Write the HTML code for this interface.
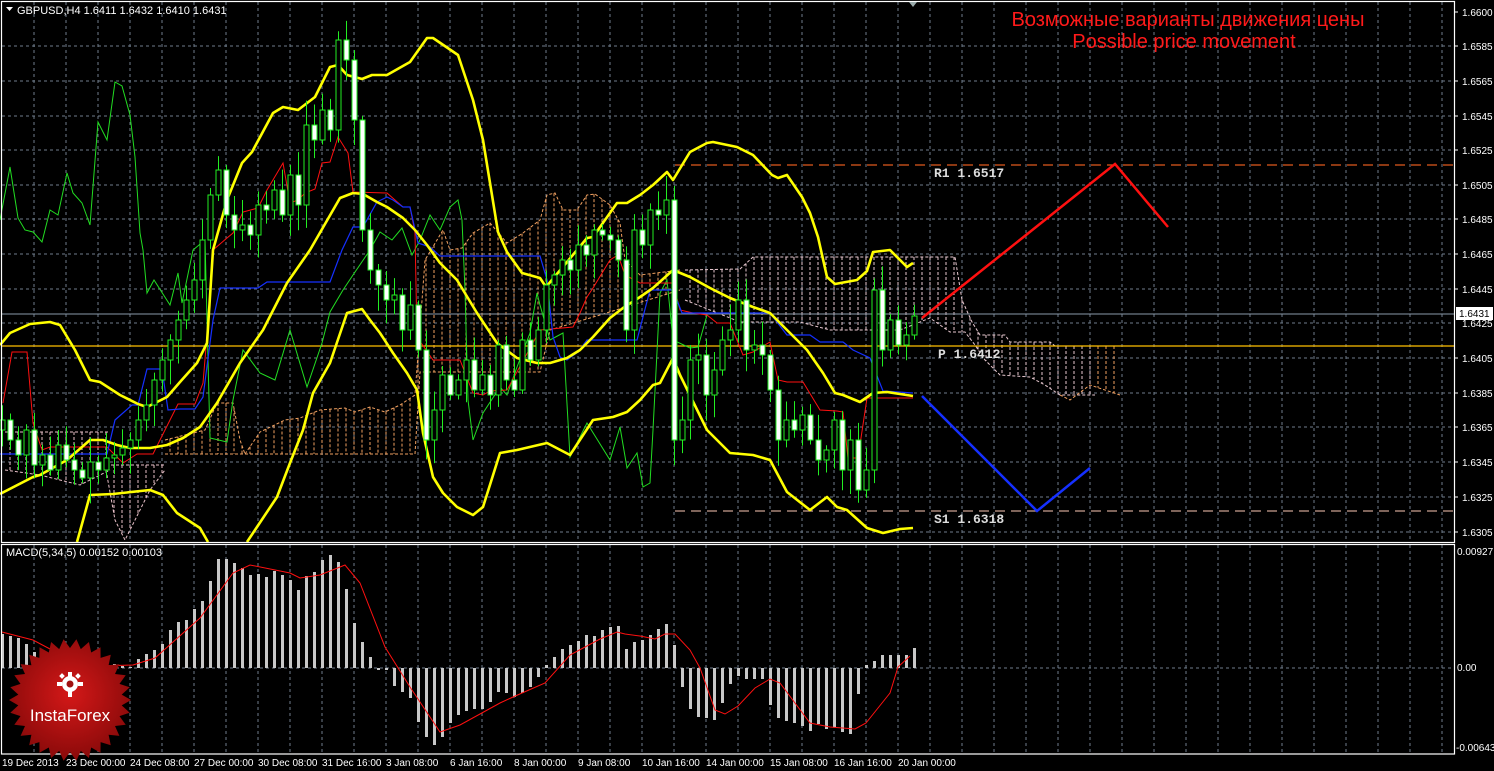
<!DOCTYPE html>
<html><head><meta charset="utf-8">
<style>
html,body{margin:0;padding:0;background:#000;width:1494px;height:771px;overflow:hidden}
svg{display:block}
text{font-family:"Liberation Sans",sans-serif}
text.mono{font-family:"Liberation Mono",monospace}
</style></head><body>
<svg id="s" width="1494" height="771" viewBox="0 0 1494 771" xmlns="http://www.w3.org/2000/svg">
<rect width="1494" height="771" fill="#000"/>
<g id="grid" stroke="#6f7d8c" stroke-width="1" stroke-dasharray="3,3"></g>
<g id="cloud" stroke-width="1" stroke-dasharray="3,2"></g>
<g id="lines" fill="none"></g>
<g id="candles"></g>
<g id="macd"></g>
<g fill="none" stroke="#fff" stroke-width="1.2">
<rect x="1.5" y="1.5" width="1453" height="541"/>
<rect x="1.5" y="544.5" width="1453" height="209.5"/>
</g>
<g id="axis" fill="#fff" font-size="10"></g>
<rect x="1456" y="307" width="37" height="13" fill="#fff"/>
<text x="1459" y="317" font-size="10" fill="#000">1.6431</text>
<path d="M6 7 L13 7 L9.5 11 Z" fill="#fff"/>
<text x="17" y="14" font-size="11" fill="#fff">GBPUSD,H4  1.6411 1.6432 1.6410 1.6431</text>
<path d="M909 2 L917 2 L913 7 Z" fill="#9aa"/>
<text x="1188" y="26" font-size="20" fill="#ff1a1a" text-anchor="middle">Возможные варианты движения цены</text>
<text x="1184" y="48" font-size="20" fill="#ff1a1a" text-anchor="middle">Possible price movement</text>
<g font-size="13" font-weight="bold" fill="#ddd">
<text class="mono" x="934" y="177">R1 1.6517</text>
<text class="mono" x="938" y="358">P 1.6412</text>
<text class="mono" x="934" y="523">S1 1.6318</text>
</g>
<text x="6" y="556" font-size="11" fill="#fff">MACD(5,34,5) 0.00152 0.00103</text>
<text x="1457" y="555" font-size="10" fill="#fff">0.00927</text>
<text x="1457" y="671" font-size="10" fill="#fff">0.00</text>
<text x="1456" y="751" font-size="10" fill="#fff">-0.00643</text>
<g id="time" fill="#fff" font-size="10"></g>
<defs><radialGradient id="rg" cx="50%" cy="45%" r="55%"><stop offset="0" stop-color="#d41818"/><stop offset="1" stop-color="#8a0a0a"/></radialGradient></defs>
<polygon id="star" fill="url(#rg)"/>
<g fill="#fff">
<circle cx="70" cy="684" r="8"/>
<circle cx="70" cy="684" r="3.5" fill="#a01010"/>
<rect x="68" y="672" width="4" height="5"/><rect x="68" y="691" width="4" height="6"/>
<rect x="57" y="682" width="5" height="4"/><rect x="78" y="682" width="5" height="4"/>
<rect x="60" y="674" width="4" height="4" transform="rotate(45 62 676)"/>
<rect x="76" y="674" width="4" height="4" transform="rotate(45 78 676)"/>
</g>
<text x="70" y="721" font-size="17" fill="#fff" text-anchor="middle">InstaForex</text>
</svg>
<script>
(function(){
var NS="http://www.w3.org/2000/svg";
function el(p,t,a){var e=document.createElementNS(NS,t);for(var k in a)e.setAttribute(k,a[k]);p.appendChild(e);return e;}
var g=document.getElementById('grid');
for(var x=34;x<1454;x+=32){el(g,'line',{x1:x,y1:2,x2:x,y2:542});el(g,'line',{x1:x,y1:545,x2:x,y2:753});}
var py=[12,46,81,116,150,185,219,254,289,323,358,393,427,462,497,532];
var pl=["1.6600","1.6585","1.6565","1.6545","1.6525","1.6505","1.6485","1.6465","1.6445","1.6425","1.6405","1.6385","1.6365","1.6345","1.6325","1.6305"];
for(var i=1;i<py.length;i++)el(g,'line',{x1:2,y1:py[i],x2:1454,y2:py[i]});
el(g,'line',{x1:2,y1:668,x2:1454,y2:668});
var ax=document.getElementById('axis');
for(var i=0;i<py.length;i++){if(pl[i]=="1.6425")continue;var t=el(ax,'text',{x:1462,y:py[i]+4});t.textContent=pl[i];el(ax,'line',{x1:1454,y1:py[i],x2:1458,y2:py[i],stroke:'#fff'});}
var t0=el(ax,'text',{x:1462,y:327});t0.textContent="1.6425";
var tl=["19 Dec 2013","23 Dec 00:00","24 Dec 08:00","27 Dec 00:00","30 Dec 08:00","31 Dec 16:00","3 Jan 08:00","6 Jan 16:00","8 Jan 00:00","9 Jan 08:00","10 Jan 16:00","14 Jan 00:00","15 Jan 08:00","16 Jan 16:00","20 Jan 00:00"];
var tg=document.getElementById('time');
for(var i=0;i<tl.length;i++){var t=el(tg,'text',{x:2+64*i,y:766});t.textContent=tl[i];}
function P(a){return a.map(function(p){return p.join(',')}).join(' ')}
function interp(a,x){if(x<=a[0][0])return a[0][1];for(var i=1;i<a.length;i++){if(x<=a[i][0]){var t=(x-a[i-1][0])/(a[i][0]-a[i-1][0]);return a[i-1][1]+t*(a[i][1]-a[i-1][1]);}}return a[a.length-1][1];}
var cg=document.getElementById('cloud');
function hatch(tp,bt,x0,x1,col){for(var x=x0;x<=x1;x+=8){var a=interp(tp,x),b=interp(bt,x);if(b-a>2)el(cg,'line',{x1:x,y1:a,x2:x,y2:b,stroke:col});}
el(cg,'polyline',{points:P(tp),fill:'none',stroke:col});el(cg,'polyline',{points:P(bt),fill:'none',stroke:col});}
hatch([[5,432],[110,432]],[[5,470],[40,475],[80,485],[110,470]],10,106,'#e8c0c8');
hatch([[106,465],[165,465]],[[106,470],[115,520],[125,540],[150,490],[165,470]],106,162,'#e8c0c8');
hatch([[165,440],[205,430],[217,403],[233,403],[240,440],[245,454]],[[165,454],[245,454]],170,242,'#f0a060');
hatch([[245,454],[260,432],[285,420],[300,418],[320,410],[345,408],[355,412],[370,407],[385,412],[400,405],[415,395],[425,260],[443,230],[450,250],[462,248],[473,233],[490,223],[507,243],[523,233],[540,220],[547,195],[555,193],[563,210],[577,210],[587,195],[595,194],[610,205],[620,223],[625,260],[640,275],[680,270]],
      [[245,454],[415,454],[420,372],[540,372],[550,330],[600,315],[680,290]],250,678,'#f0a060');
hatch([[685,270],[740,269],[753,257],[955,257],[962,300],[972,322],[980,335],[1005,335],[1010,342],[1050,342],[1055,346],[1095,346]],
      [[685,300],[740,322],[800,322],[830,330],[900,330],[930,318],[950,332],[965,332],[975,345],[985,360],[1000,375],[1030,377],[1045,385],[1060,395],[1080,395],[1095,395]],690,1094,'#e8c8d0');
hatch([[1060,346],[1120,346]],[[1060,395],[1070,400],[1090,385],[1120,395]],1098,1118,'#f0a060');
var lg=document.getElementById('lines');
el(lg,'line',{x1:2,y1:314,x2:1454,y2:314,stroke:'#8a9aaa','stroke-width':1});
el(lg,'line',{x1:2,y1:346,x2:1454,y2:346,stroke:'#ffc000','stroke-width':1.2});
el(lg,'line',{x1:675,y1:165,x2:1454,y2:165,stroke:'#e05a1e','stroke-width':1.2,'stroke-dasharray':'10,6'});
el(lg,'line',{x1:675,y1:511,x2:1454,y2:511,stroke:'#c9a090','stroke-width':1.2,'stroke-dasharray':'10,6'});
var green=[[0,220],[10,167],[18,218],[25,230],[33,232],[42,242],[50,210],[58,215],[67,173],[73,193],[82,203],[90,225],[98,122],[107,140],[115,82],[122,86],[130,115],[135,157],[140,233],[143,250],[147,293],[154,280],[170,305],[178,273],[182,303],[193,250],[205,240],[210,438],[227,442],[233,400],[243,350],[260,373],[275,380],[290,330],[307,387],[322,343],[330,312],[343,290],[353,275],[370,250],[380,232],[392,240],[402,228],[412,255],[420,240],[430,215],[440,230],[450,207],[458,200],[462,220],[465,290],[468,400],[473,440],[483,413],[500,387],[507,395],[517,367],[530,333],[537,293],[540,305],[550,340],[563,333],[570,457],[587,423],[610,460],[620,427],[627,468],[637,453],[643,487],[650,483],[653,430],[660,293],[667,280],[673,340],[690,348],[698,347],[707,315]];
el(lg,'polyline',{points:P(green),stroke:'#22dd22','stroke-width':1});
var red=[[3,403],[12,352],[27,352],[33,423],[42,450],[50,447],[107,447],[123,463],[137,454],[153,454],[178,404],[195,404],[203,383],[210,300],[213,250],[227,238],[233,233],[243,212],[258,208],[267,190],[283,163],[290,203],[298,200],[305,193],[315,189],[322,163],[330,162],[338,137],[348,153],[353,192],[387,193],[403,207],[410,207],[415,233],[417,337],[433,360],[460,360],[473,393],[483,395],[490,391],[507,390],[540,330],[573,327],[580,313],[587,297],[593,288],[610,260],[618,255],[625,275],[640,283],[673,283],[680,310],[693,313],[707,315],[717,323],[730,323],[743,355],[753,352],[770,342],[778,380],[787,382],[803,382],[820,410],[837,411],[843,412],[848,458],[858,458],[867,398],[913,398]];
el(lg,'polyline',{points:P(red),stroke:'#ff1010','stroke-width':1});
var blue=[[0,454],[107,454],[115,420],[132,405],[138,405],[147,369],[162,369],[168,410],[180,409],[195,409],[203,397],[213,320],[220,288],[258,288],[267,282],[330,282],[342,250],[353,227],[363,227],[377,202],[387,197],[393,200],[403,207],[410,207],[418,243],[430,247],[440,256],[540,256],[547,280],[553,337],[560,357],[567,360],[578,352],[587,340],[637,340],[650,290],[673,290],[682,313],[770,313],[787,335],[810,335],[820,342],[843,342],[853,350],[870,358],[883,391],[913,393]];
el(lg,'polyline',{points:P(blue),stroke:'#1530ff','stroke-width':1.2});
var ya=[[0,345],[10,333],[30,324],[50,322],[60,325],[75,350],[90,380],[100,382],[120,395],[138,404],[147,407],[167,397],[180,382],[197,363],[207,343],[213,250],[227,200],[242,163],[252,152],[273,113],[283,107],[298,110],[315,97],[322,83],[330,67],[338,65],[347,75],[362,79],[372,75],[387,75],[410,62],[427,38],[433,38],[458,55],[473,100],[483,140],[498,232],[507,252],[522,273],[540,278],[546,287],[567,262],[587,238],[593,237],[617,203],[627,203],[640,195],[653,185],[667,172],[673,180],[690,152],[707,143],[713,142],[737,147],[753,155],[772,175],[778,178],[787,175],[802,197],[810,213],[818,237],[827,277],[835,284],[857,280],[867,271],[873,252],[890,250],[907,267],[913,263]];
var yb=[[0,494],[33,477],[40,475],[67,460],[90,440],[103,440],[117,445],[130,448],[150,448],[167,445],[183,438],[200,427],[217,403],[240,363],[263,330],[287,283],[310,250],[340,198],[353,193],[363,194],[377,202],[387,207],[403,218],[415,230],[427,245],[440,263],[457,280],[477,313],[497,343],[517,358],[537,363],[550,363],[567,358],[580,350],[593,337],[610,318],[623,308],[640,297],[653,288],[673,270],[690,277],[710,288],[730,298],[753,307],[770,313],[787,330],[807,350],[823,373],[835,393],[843,395],[860,402],[873,393],[887,392],[900,394],[913,396]];
var yc=[[77,542],[90,495],[113,494],[150,490],[163,495],[177,513],[200,528],[208,542]];
var yd=[[247,542],[277,497],[290,463],[303,430],[313,393],[330,363],[347,313],[362,309],[370,320],[380,333],[393,353],[407,373],[417,390],[423,433],[433,477],[443,493],[457,507],[473,515],[483,507],[500,453],[517,450],[547,443],[570,455],[593,420],[613,417],[627,412],[640,400],[653,385],[660,383],[673,358],[680,375],[707,430],[730,453],[753,455],[770,460],[787,492],[810,510],[827,497],[837,507],[847,510],[867,528],[883,533],[900,529],[913,528]];
var cg2=document.getElementById('candles');
var cl=[420,440,455,430,465,455,470,445,460,470,478,462,470,458,455,448,440,420,405,380,360,340,320,300,280,240,195,170,215,230,225,235,205,210,190,215,175,205,125,140,110,130,40,60,120,230,270,285,300,295,330,305,350,440,410,375,395,380,360,390,375,395,345,380,390,340,360,330,285,275,260,270,245,255,230,235,240,260,330,230,245,210,215,200,440,420,360,355,395,370,340,330,300,350,345,355,390,440,420,430,415,440,460,450,420,470,440,490,470,290,350,320,345,335,316];
var seed=7;function rnd(){seed=(seed*9301+49297)%233280;return seed/233280;}
var prev=430;
for(var k=0;k<cl.length;k++){var x=2+8*k,o=prev,c=cl[k];var bt=Math.min(o,c),bb=Math.max(o,c);
var hi=bt-4-rnd()*22,lo=bb+4+rnd()*22;
el(cg2,'line',{x1:x+.5,y1:hi,x2:x+.5,y2:lo,stroke:'#22ee22','stroke-width':1});
var bear=c>o;
el(cg2,'rect',{x:x-2,y:bt,width:5,height:Math.max(bb-bt,1.5),fill:bear?'#fff':'#000',stroke:'#22ee22','stroke-width':1});
prev=c;}
[ya,yb,yc,yd].forEach(function(a){el(lg,'polyline',{points:P(a),stroke:'#ffff00','stroke-width':2.6,'stroke-linejoin':'round'});});
el(lg,'polyline',{points:'922,318 1115,164 1168,227',stroke:'#ff1010','stroke-width':2.5});
el(lg,'polyline',{points:'922,396 1037,511 1090,468',stroke:'#1530ff','stroke-width':2.5});
var h=[34,32,30,24,16,13,6,8,3,2,3,2,1,3,4,2,1,9,14,18,24,38,46,48,59,67,87,109,109,105,100,93,94,91,97,93,88,78,92,96,108,113,106,79,45,26,11,-2,-2,-18,-24,-30,-54,-69,-77,-69,-55,-47,-43,-41,-41,-34,-24,-25,-29,-25,-19,-9,3,11,19,23,27,33,32,38,41,42,19,26,28,33,39,44,23,-19,-41,-49,-50,-52,-35,-16,-8,-11,-11,-11,-37,-50,-53,-55,-58,-63,-56,-61,-59,-64,-66,-26,3,7,13,13,13,13,20];
var mg=document.getElementById('macd');
for(var k=0;k<h.length;k++){var x=1+8*k,v=h[k];el(mg,'rect',{x:x,y:v>0?668-v:668,width:3,height:Math.max(Math.abs(v),1),fill:'#c8c8c8'});}
var sig=[[2,632],[33,640],[67,658],[100,666],[133,665],[155,658],[200,618],[233,573],[250,565],[290,573],[300,578],[320,575],[345,565],[360,583],[385,647],[410,687],[440,732],[460,725],[500,703],[513,697],[545,683],[570,655],[600,639],[617,632],[625,634],[640,636],[655,639],[665,634],[675,634],[690,650],[700,668],[715,710],[725,714],[738,706],[755,688],[770,679],[780,683],[810,723],[830,727],[855,729],[866,723],[890,693],[898,667],[910,656]];
el(mg,'polyline',{points:P(sig),fill:'none',stroke:'#ff1010','stroke-width':1});
var pts=[],n=30;for(var i=0;i<2*n;i++){var r=i%2?52:61,a=Math.PI*i/n;pts.push((70+r*Math.cos(a)).toFixed(1)+','+(700+r*Math.sin(a)).toFixed(1));}
document.getElementById('star').setAttribute('points',pts.join(' '));
})();
</script>
</body></html>
